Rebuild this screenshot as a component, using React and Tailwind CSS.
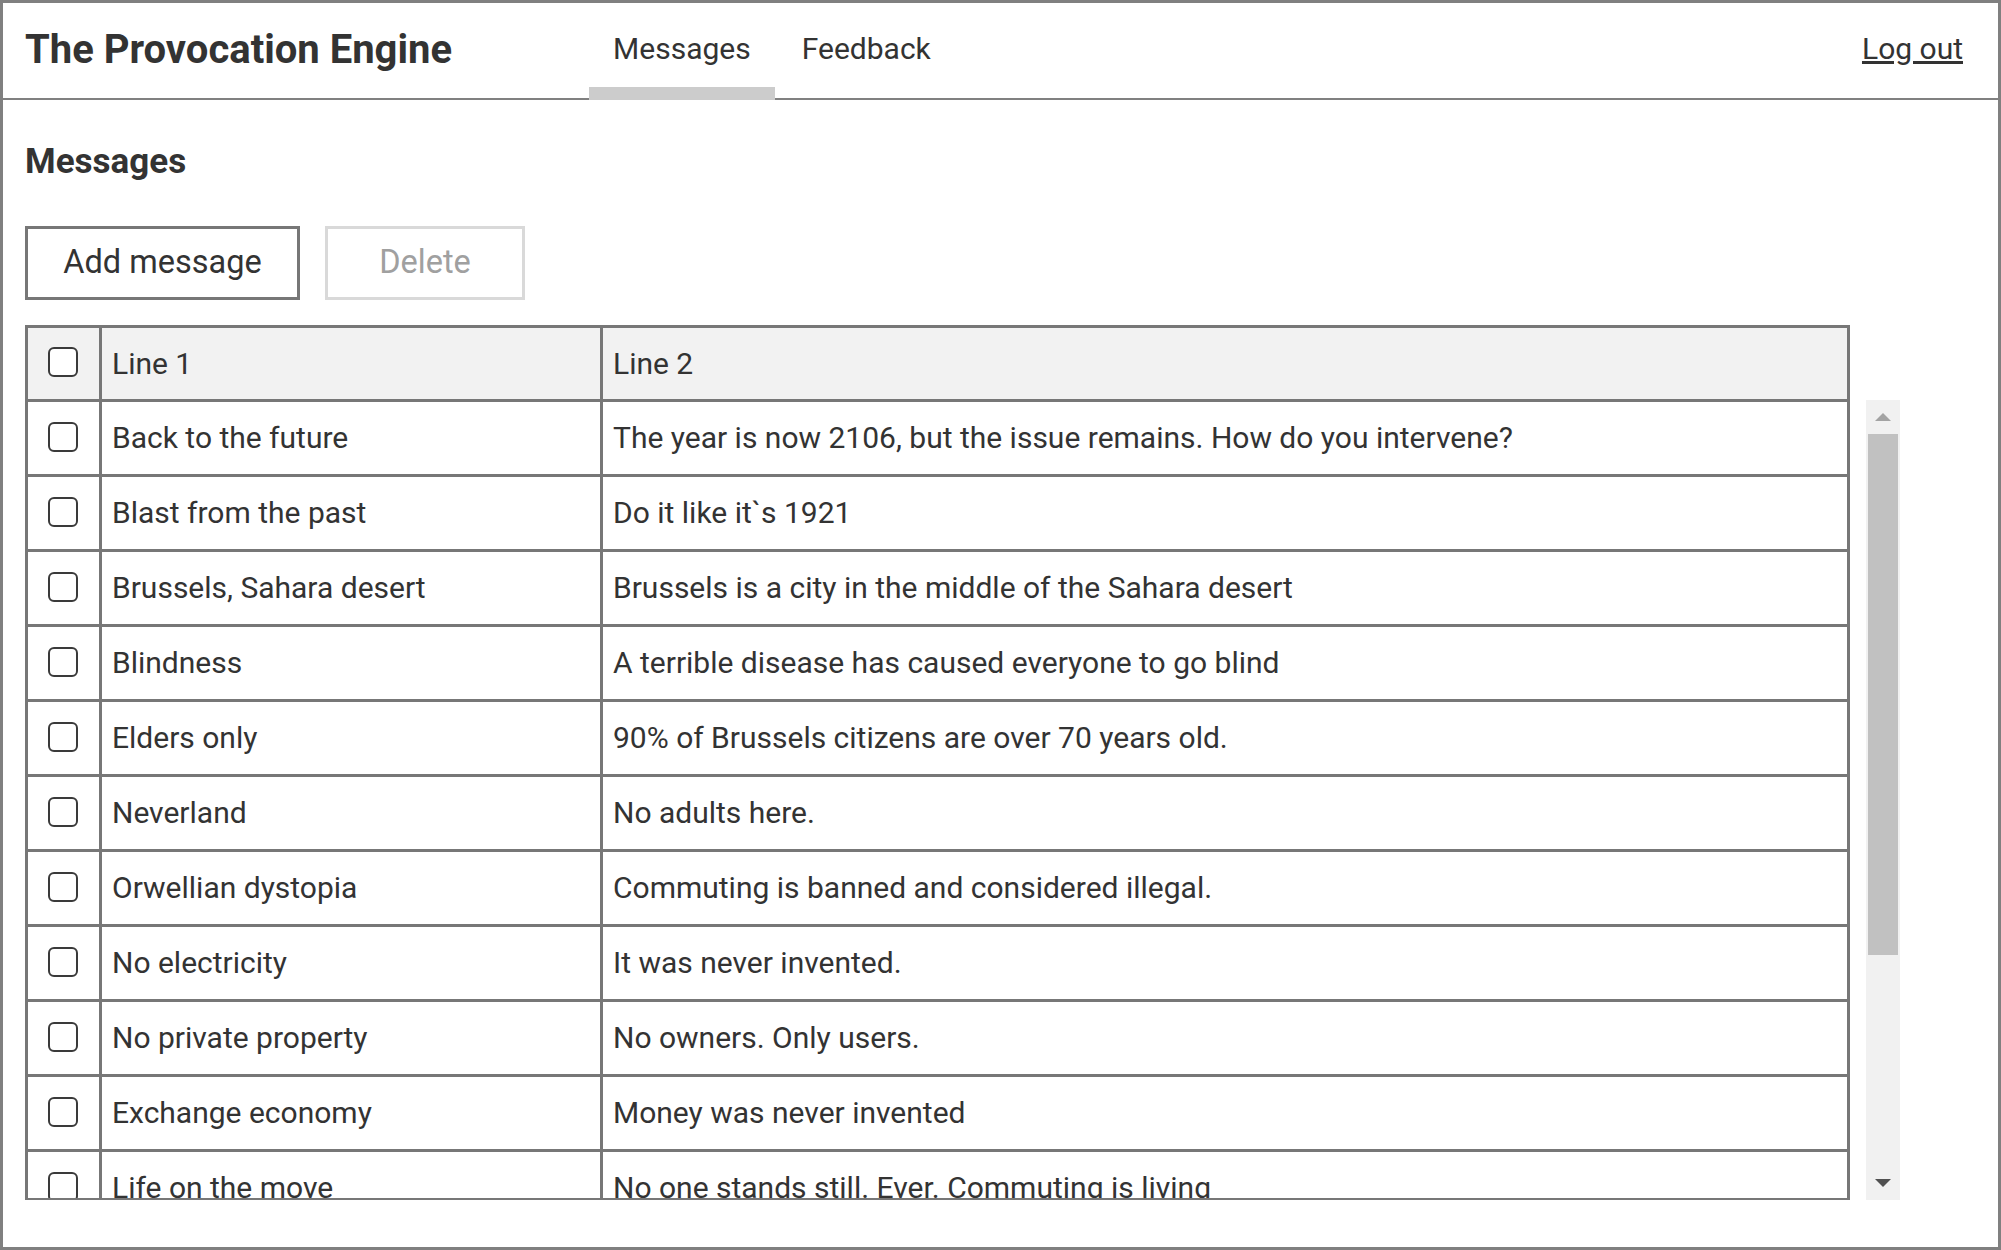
import React from "react";

const rows = [
  ["Back to the future", "The year is now 2106, but the issue remains. How do you intervene?"],
  ["Blast from the past", "Do it like it`s 1921"],
  ["Brussels, Sahara desert", "Brussels is a city in the middle of the Sahara desert"],
  ["Blindness", "A terrible disease has caused everyone to go blind"],
  ["Elders only", "90% of Brussels citizens are over 70 years old."],
  ["Neverland", "No adults here."],
  ["Orwellian dystopia", "Commuting is banned and considered illegal."],
  ["No electricity", "It was never invented."],
  ["No private property", "No owners. Only users."],
  ["Exchange economy", "Money was never invented"],
  ["Life on the move", "No one stands still. Ever. Commuting is living"],
];

function Box() {
  return (
    <div className="w-[30px] h-[30px] mb-[3px] mr-[2px] border-2 border-[#3a3a3a] rounded-[6px] bg-white" />
  );
}

function Row({ a, b, header }) {
  return (
    <div
      className={
        "flex shrink-0 border-b-[3px] border-[#777777] " +
        (header ? "h-[74px] bg-[#f2f2f2]" : "h-[75px] bg-white")
      }
    >
      <div className="w-[74px] shrink-0 border-r-[3px] border-[#777777] flex items-center justify-center">
        <Box />
      </div>
      <div className="w-[501px] shrink-0 border-r-[3px] border-[#777777] flex items-center pl-[10px] whitespace-nowrap">
        {a}
      </div>
      <div className="flex-1 flex items-center pl-[10px] whitespace-nowrap">{b}</div>
    </div>
  );
}

export default function App() {
  return (
    <div className="w-[2001px] h-[1250px] border-[3px] border-[#808080] bg-white flex flex-col font-['Roboto',sans-serif] text-[#333333] overflow-hidden">
      <header className="h-[97px] shrink-0 border-b-2 border-[#808080] flex items-stretch pl-[22px] pr-[35px]">
        <div className="self-center text-[40px] font-bold leading-[48px] mb-[1px]">The Provocation Engine</div>
        <nav className="flex ml-[137px] -mb-[2px]">
          <a className="flex items-center px-[24px] pb-[5px] text-[30px] leading-[36px] shadow-[inset_0_-13px_0_#cccccc] cursor-pointer">
            Messages
          </a>
          <a className="flex items-center pl-[27px] pr-[24px] pb-[5px] text-[30px] leading-[36px] cursor-pointer">
            Feedback
          </a>
        </nav>
        <a className="ml-auto self-center text-[30px] leading-[36px] underline cursor-pointer mb-[3px]">Log out</a>
      </header>

      <main className="flex-1 flex flex-col px-[22px] pt-[42px]">
        <h1 className="text-[35px] font-bold leading-[40px]">Messages</h1>
        <div className="flex gap-[25px] mt-[44px]">
          <button className="w-[275px] h-[74px] border-[3px] border-[#777777] bg-white text-[32.5px] leading-[38px] text-[#333333] pb-[2px]">
            Add message
          </button>
          <button className="w-[200px] h-[74px] border-[3px] border-[#d9d9d9] bg-white text-[32.5px] leading-[38px] text-[#a0a0a0] pb-[2px]">
            Delete
          </button>
        </div>

        <div className="flex items-start mt-[25px]">
          <div className="w-[1825px] h-[875px] overflow-hidden border-t-[3px] border-x-[3px] border-b-2 border-[#777777] flex flex-col text-[30px] leading-[36px]">
            <Row a="Line 1" b="Line 2" header />
            {rows.map((r, i) => (
              <Row key={i} a={r[0]} b={r[1]} />
            ))}
          </div>

          <div className="ml-[16px] mt-[75px] w-[34px] h-[800px] bg-[#f1f1f1] flex flex-col items-center">
            <div className="h-[34px] w-full flex items-center justify-center">
              <svg width="16" height="8" viewBox="0 0 16 8">
                <polygon points="8,0 16,8 0,8" fill="#a3a3a3" />
              </svg>
            </div>
            <div className="w-[30px] h-[521px] bg-[#c1c1c1]" />
            <div className="flex-1" />
            <div className="h-[34px] w-full flex items-center justify-center">
              <svg width="16" height="8" viewBox="0 0 16 8">
                <polygon points="0,0 16,0 8,8" fill="#505050" />
              </svg>
            </div>
          </div>
        </div>
      </main>
    </div>
  );
}
